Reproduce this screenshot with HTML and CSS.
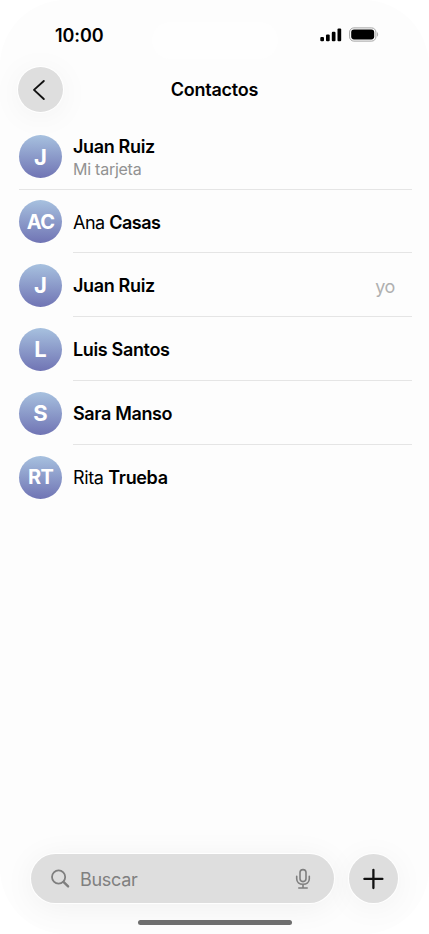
FILE: index.html
```html
<!DOCTYPE html>
<html lang="es">
<head>
    <meta charset="UTF-8">
    <meta name="viewport" content="width=device-width, initial-scale=1.0">
    <title>Contactos</title>
    <link rel="stylesheet" href="styles.css">
</head>
<body>
    <div class="phone">
        <div class="status">
            <div class="time">10:00</div>
            <div class="island"></div>
            <svg class="signal" width="22" height="14" viewBox="0 0 22 14">
                <rect x="0.3" y="9" width="3.7" height="4.3" rx="1.1"/>
                <rect x="6" y="6.5" width="3.7" height="6.8" rx="1.1"/>
                <rect x="11.8" y="3.8" width="3.7" height="9.5" rx="1.1"/>
                <rect x="17.5" y="0.5" width="3.7" height="12.8" rx="1.1"/>
            </svg>
            <svg class="battery" width="30" height="15" viewBox="0 0 30 15">
                <rect x="0.6" y="0.9" width="26.3" height="13.2" rx="4.2" fill="none" stroke="#a3a3a3"/>
                <rect x="2.2" y="2.6" width="23" height="9.8" rx="2.8"/>
                <path d="M28.2 5.3c1.2.5 1.2 3.9 0 4.4z" fill="#a3a3a3"/>
            </svg>
        </div>

        <div class="header">
            <div class="btn back">
                <svg width="45" height="45" viewBox="0 0 45 45">
                    <path d="M25.8 14L16 22.9L25.8 32" />
                </svg>
            </div>
            <div class="title">Contactos</div>
        </div>

        <div class="list">
            <div class="row card">
                <div class="avatar">J</div>
                <div class="info">
                    <div class="name"><b>Juan Ruiz</b></div>
                    <div class="sub">Mi tarjeta</div>
                </div>
            </div>
            <div class="row first">
                <div class="avatar two">AC</div>
                <div class="info"><div class="name tight">Ana <b>Casas</b></div></div>
            </div>
            <div class="row">
                <div class="avatar">J</div>
                <div class="info">
                    <div class="name"><b>Juan Ruiz</b></div>
                    <div class="me">yo</div>
                </div>
            </div>
            <div class="row">
                <div class="avatar">L</div>
                <div class="info"><div class="name"><b>Luis Santos</b></div></div>
            </div>
            <div class="row">
                <div class="avatar">S</div>
                <div class="info"><div class="name"><b>Sara Manso</b></div></div>
            </div>
            <div class="row last">
                <div class="avatar two">RT</div>
                <div class="info"><div class="name">Rita <b>Trueba</b></div></div>
            </div>
        </div>

        <div class="bottom">
            <div class="search">
                <svg class="lens" width="20" height="20" viewBox="0 0 20 20">
                    <circle cx="7.6" cy="8" r="6.6" stroke-width="1.8"/>
                    <path d="M12.5 12.9L17.1 17.4" stroke-width="2.4"/>
                </svg>
                <span class="placeholder">Buscar</span>
                <svg class="mic" width="16" height="22" viewBox="0 0 16 22">
                    <rect x="5" y="1.6" width="6" height="12" rx="3"/>
                    <path d="M1.7 8.2v2.6c0 3.5 2.7 5.5 6.3 5.5s6.3-2 6.3-5.5V8.2M8 16.3v3.5M3.8 20h8.4"/>
                </svg>
            </div>
            <div class="btn add">
                <svg width="49" height="49" viewBox="0 0 49 49">
                    <path d="M24.4 15.8v18.2M15.4 24.9h18"/>
                </svg>
            </div>
        </div>
        <div class="home"></div>
    </div>
</body>
</html>
```
FILE: styles.css
```css
*{
    box-sizing: border-box;
}
body{
    margin: 0;
    background-color: #fff;
    font-family: Inter, "Liberation Sans", sans-serif;
    color: #000;
}
.phone{
    display: flex;
    flex-direction: column;
    width: 429px;
    height: 934px;
    overflow: hidden;
    border-radius: 66px;
    background-color: #fdfdfd;
}
svg{
    display: block;
    flex: none;
}
/* status bar */
.status{
    display: flex;
    align-items: center;
    height: 67px;
    padding: 2px 0 0 55px;
}
.time{
    width: 97px;
    padding-top: 2px;
    font-size: 18px;
    font-weight: 600;
    letter-spacing: -0.1px;
}
.island{
    width: 126px;
    height: 37px;
    margin-top: 12px;
    border-radius: 19px;
    background-color: #fefefe;
}
.signal{
    margin-left: 42px;
}
.battery{
    margin-left: 7px;
}
/* header */
.header{
    display: grid;
    grid-template-columns: 45px 1fr 45px;
    align-items: center;
    height: 58px;
    padding: 0 18px 13px;
}
.btn{
    border-radius: 50%;
    background-color: #dedede;
    box-shadow: 0 0 1px 1px #fff, 0 4px 32px rgba(0,0,0,0.05);
}
.btn path{
    fill: none;
    stroke: #111;
    stroke-width: 1.9;
    stroke-linecap: round;
    stroke-linejoin: round;
}
.back{
    width: 45px;
    height: 45px;
}
.title{
    text-align: center;
    font-size: 18px;
    font-weight: 600;
    letter-spacing: -0.25px;
}
/* contacts */
.list{
    flex: 1;
    padding: 0 17px 0 19px;
}
.row{
    display: flex;
    align-items: center;
    height: 64px;
}
.card{
    height: 65px;
    border-bottom: 1px solid #e5e5e5;
}
.first{
    height: 63px;
}
.avatar{
    display: flex;
    align-items: center;
    justify-content: center;
    flex: none;
    width: 43px;
    height: 43px;
    margin-right: 11px;
    border-radius: 50%;
    background: linear-gradient(#a7c1df, #7074b4);
    color: #fff;
    font-size: 22px;
    font-weight: 700;
}
.card .avatar{
    margin-bottom: 1px;
}
.two{
    font-size: 20px;
    letter-spacing: -0.7px;
}
.info{
    flex: 1;
    display: flex;
    align-items: center;
    justify-content: space-between;
    height: 100%;
    padding: 3px 17px 0 0;
    border-bottom: 1px solid #e5e5e5;
}
.card .info{
    flex-direction: column;
    align-items: flex-start;
    justify-content: center;
    padding-top: 0;
    border: 0;
}
.last .info{
    border-color: transparent;
}
.name{
    font-size: 18px;
    line-height: 24px;
    letter-spacing: -0.35px;
}
.tight{
    letter-spacing: -0.5px;
}
.name b{
    font-weight: 600;
}
.sub{
    font-size: 16px;
    line-height: 20px;
    letter-spacing: -0.25px;
    color: #929292;
}
.me{
    font-size: 18px;
    letter-spacing: -0.4px;
    color: #b0b0b0;
}
/* search bar */
.bottom{
    display: flex;
    justify-content: space-between;
    padding: 0 31px 0 31px;
}
.search{
    display: flex;
    align-items: center;
    width: 303px;
    height: 49px;
    padding: 0 23px 0 20px;
    border-radius: 25px;
    background-color: #dedede;
    box-shadow: 0 0 1px 1px #fff, 0 4px 32px rgba(0,0,0,0.06);
}
.lens, .mic{
    fill: none;
    stroke: #7f7f7f;
    stroke-width: 1.6;
    stroke-linecap: round;
}
.placeholder{
    flex: 1;
    padding-top: 1px;
    margin-left: 9px;
    font-size: 18px;
    letter-spacing: -0.3px;
    color: #808080;
}
.add{
    width: 49px;
    height: 49px;
}
.add path{
    stroke-width: 2.3;
}
.home{
    width: 154px;
    height: 5px;
    margin: 17px auto 9px;
    border-radius: 3px;
    background-color: #6e6e6e;
}
```
